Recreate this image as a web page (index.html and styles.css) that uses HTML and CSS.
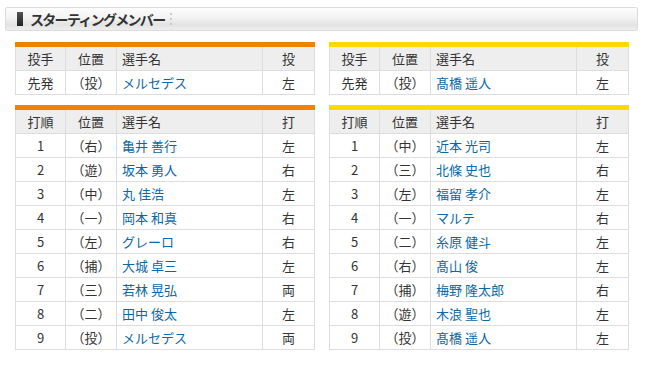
FILE: index.html
```html
<!DOCTYPE html>
<html lang="ja">
<head>
<meta charset="utf-8">
<title>スターティングメンバー</title>
<link rel="stylesheet" href="styles.css">
</head>
<body>
<div class="page">
  <div class="title-bar">
    <span class="mark"></span>
    <h2 class="title">スターティングメンバー</h2>
    <span class="dots"><i></i><i></i><i></i></span>
  </div>
  <div class="grid">
    <div class="team team-home">
      <table class="lineup">
        <colgroup><col class="w1"><col class="w2"><col class="w3"><col class="w4"></colgroup>
        <tr class="head"><th>投手</th><th>位置</th><th class="name">選手名</th><th>投</th></tr>
        <tr><td>先発</td><td>（投）</td><td class="name"><a>メルセデス</a></td><td>左</td></tr>
      </table>
    </div>
    <div class="team team-away">
      <table class="lineup">
        <colgroup><col class="w1"><col class="w2"><col class="w3"><col class="w4"></colgroup>
        <tr class="head"><th>投手</th><th>位置</th><th class="name">選手名</th><th>投</th></tr>
        <tr><td>先発</td><td>（投）</td><td class="name"><a>髙橋 遥人</a></td><td>左</td></tr>
      </table>
    </div>
    <div class="team team-home">
      <table class="lineup">
        <colgroup><col class="w1"><col class="w2"><col class="w3"><col class="w4"></colgroup>
        <tr class="head"><th>打順</th><th>位置</th><th class="name">選手名</th><th>打</th></tr>
        <tr><td>1</td><td>（右）</td><td class="name"><a>亀井 善行</a></td><td>左</td></tr>
        <tr><td>2</td><td>（遊）</td><td class="name"><a>坂本 勇人</a></td><td>右</td></tr>
        <tr><td>3</td><td>（中）</td><td class="name"><a>丸 佳浩</a></td><td>左</td></tr>
        <tr><td>4</td><td>（一）</td><td class="name"><a>岡本 和真</a></td><td>右</td></tr>
        <tr><td>5</td><td>（左）</td><td class="name"><a>グレーロ</a></td><td>右</td></tr>
        <tr><td>6</td><td>（捕）</td><td class="name"><a>大城 卓三</a></td><td>左</td></tr>
        <tr><td>7</td><td>（三）</td><td class="name"><a>若林 晃弘</a></td><td>両</td></tr>
        <tr><td>8</td><td>（二）</td><td class="name"><a>田中 俊太</a></td><td>左</td></tr>
        <tr><td>9</td><td>（投）</td><td class="name"><a>メルセデス</a></td><td>両</td></tr>
      </table>
    </div>
    <div class="team team-away">
      <table class="lineup">
        <colgroup><col class="w1"><col class="w2"><col class="w3"><col class="w4"></colgroup>
        <tr class="head"><th>打順</th><th>位置</th><th class="name">選手名</th><th>打</th></tr>
        <tr><td>1</td><td>（中）</td><td class="name"><a>近本 光司</a></td><td>左</td></tr>
        <tr><td>2</td><td>（三）</td><td class="name"><a>北條 史也</a></td><td>右</td></tr>
        <tr><td>3</td><td>（左）</td><td class="name"><a>福留 孝介</a></td><td>左</td></tr>
        <tr><td>4</td><td>（一）</td><td class="name"><a>マルテ</a></td><td>右</td></tr>
        <tr><td>5</td><td>（二）</td><td class="name"><a>糸原 健斗</a></td><td>左</td></tr>
        <tr><td>6</td><td>（右）</td><td class="name"><a>髙山 俊</a></td><td>左</td></tr>
        <tr><td>7</td><td>（捕）</td><td class="name"><a>梅野 隆太郎</a></td><td>右</td></tr>
        <tr><td>8</td><td>（遊）</td><td class="name"><a>木浪 聖也</a></td><td>左</td></tr>
        <tr><td>9</td><td>（投）</td><td class="name"><a>髙橋 遥人</a></td><td>左</td></tr>
      </table>
    </div>
  </div>
</div>
</body>
</html>
```

FILE: styles.css
```css
html, body {
  margin: 0;
  padding: 0;
  background: #fff;
}
body {
  font-family: "Noto Sans CJK JP", "Noto Sans", sans-serif;
  color: #333;
  font-size: 13px;
}
.page {
  width: 633px;
  padding: 7px 0 0 5px;
}
.title-bar {
  height: 22px;
  border: 1px solid #dcdcdc;
  border-radius: 2px;
  background: linear-gradient(#fdfdfd 0%, #f3f3f3 45%, #e3e3e3 75%, #ededed 100%);
  display: flex;
  align-items: center;
}
.mark {
  width: 6px;
  height: 14px;
  margin-left: 11px;
  background: linear-gradient(#555, #222);
}
.title {
  margin: 0 0 0 7px;
  font-size: 14px;
  font-weight: bold;
  color: #333;
  letter-spacing: -1.7px;
  line-height: 22px;
}
.dots {
  display: flex;
  flex-direction: column;
  gap: 3px;
  margin-left: 6px;
}
.dots i {
  display: block;
  width: 2px;
  height: 2px;
  background: #c8c8c8;
}
.grid {
  display: grid;
  grid-template-columns: 300px 300px;
  column-gap: 14px;
  row-gap: 10px;
  padding: 11px 0 0 10px;
}
.team {
  width: 300px;
  border-top: 5px solid #ef8200;
}
.team-away {
  border-top-color: #ffd900;
}
.lineup {
  width: 299px;
  border-collapse: collapse;
  table-layout: fixed;
}
.lineup .w1 { width: 50px; }
.lineup .w2 { width: 51px; }
.lineup .w3 { width: 146px; }
.lineup .w4 { width: 52px; }
.lineup th, .lineup td {
  border: 1px solid #dddddd;
  height: 23px;
  padding: 0;
  font-weight: normal;
  text-align: center;
  line-height: 22px;
  white-space: nowrap;
}
.lineup tr:first-child th { border-top: 0; }
.lineup .head th { background: #eeeeee; }
.lineup .name { text-align: left; padding-left: 5px; }
.lineup a {
  color: #0a68a8;
  text-decoration: none;
}
```
